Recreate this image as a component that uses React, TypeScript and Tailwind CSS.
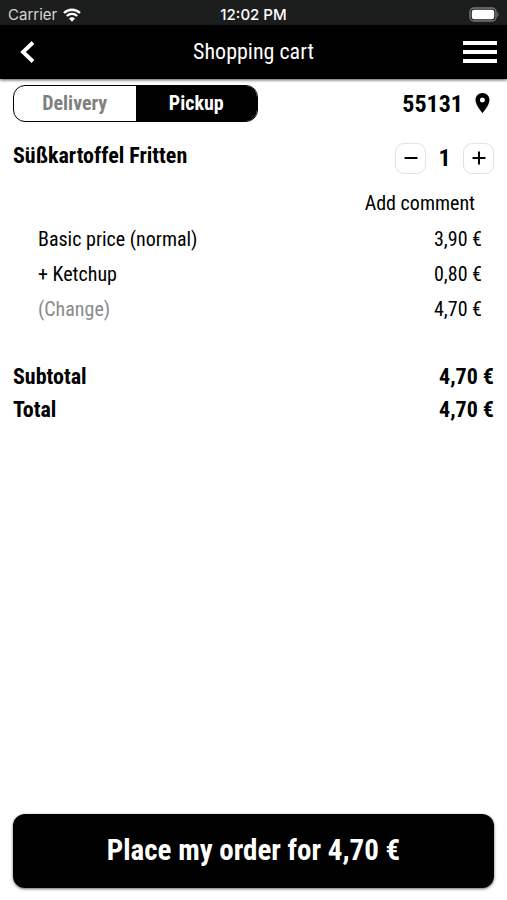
import { useState } from "react";

const unitPrice = { base: 3.9, ketchup: 0.8 };

function formatPrice(value: number) {
  return `${value.toFixed(2).replace(".", ",")} €`;
}

function StatusBar() {
  return (
    <div className="grid h-[25px] grid-cols-3 items-center bg-[#1c1e1d] px-2 pt-1 font-['Inter','Liberation_Sans',sans-serif] text-[15px] leading-5 text-white">
      <div className="flex items-center gap-[6px] text-[#d6d6d6]">
        <span>Carrier</span>
        <svg aria-hidden="true" className="h-[14px] w-[18px]" fill="none" viewBox="0 0 18 14">
          <path d="M1 5a11.5 11.5 0 0 1 16 0" stroke="#fff" strokeWidth="2.4" />
          <path d="M3.8 8a7.5 7.5 0 0 1 10.4 0" stroke="#fff" strokeWidth="2.3" />
          <path d="M9 13.8 6 10.6a4.4 4.4 0 0 1 6 0z" fill="#fff" />
        </svg>
      </div>
      <span className="text-center font-medium">12:02 PM</span>
      <svg aria-hidden="true" className="h-[15px] w-[31px] justify-self-end" fill="none" viewBox="0 0 31 15">
        <rect height="13" rx="4" stroke="#777978" strokeWidth="1.4" width="26" x="2" y="1" />
        <rect fill="#fff" height="9.4" rx="2.2" width="22.4" x="3.8" y="2.8" />
        <path d="M29.4 5.2c1.6.6 1.6 4 0 4.6z" fill="#777978" />
      </svg>
    </div>
  );
}

function Header() {
  return (
    <header className="flex h-[54px] items-center justify-between bg-black px-[10px] text-white shadow-[0_1px_3px_rgba(0,0,0,0.7)]">
      <button aria-label="Back" className="flex w-9 justify-start pl-[10px]" type="button">
        <svg aria-hidden="true" className="h-[22px] w-[15px]" fill="none" viewBox="0 0 15 22">
          <path d="M13 1.5 3 11l10 9.500" stroke="#fff" strokeWidth="3.8" />
        </svg>
      </button>
      <h1 className="text-[22px] leading-7">Shopping cart</h1>
      <button aria-label="Menu" className="flex w-9 justify-end" type="button">
        <svg aria-hidden="true" className="h-6 w-[34px]" viewBox="0 0 34 24">
          <path d="M0 1h34v4H0zM0 10h34v4H0zM0 19h34v4H0z" fill="#fff" />
        </svg>
      </button>
    </header>
  );
}

export default function App() {
  const [mode, setMode] = useState<"delivery" | "pickup">("pickup");
  const [quantity, setQuantity] = useState(1);

  const total = quantity * (unitPrice.base + unitPrice.ketchup);
  const stepper = "flex h-[31px] w-[31px] items-center justify-center rounded-[9px] border border-[#e2e2e2]";

  return (
    <div className="flex min-h-screen flex-col bg-white font-['Roboto_Condensed',Roboto,sans-serif] text-black">
      <StatusBar />
      <Header />
      <main className="flex flex-1 flex-col px-[13px] pt-[6px] pb-3">
        <div className="flex items-center justify-between">
          <div className="flex h-[37px] w-[245px] overflow-hidden rounded-xl border border-black text-[20px] font-bold">
            <button
              aria-pressed={mode === "delivery"}
              className={`flex-1 pb-px ${mode === "delivery" ? "bg-black text-white" : "text-[#808080]"}`}
              onClick={() => setMode("delivery")}
              type="button"
            >
              Delivery
            </button>
            <button
              aria-pressed={mode === "pickup"}
              className={`flex-1 pb-px ${mode === "pickup" ? "bg-black text-white" : "text-[#808080]"}`}
              onClick={() => setMode("pickup")}
              type="button"
            >
              Pickup
            </button>
          </div>
          <button className="flex items-center gap-3 pr-1 text-[24px] leading-8 font-bold" type="button">
            55131
            <svg aria-hidden="true" className="mb-[2px] h-5 w-[15px]" viewBox="5 2 14 20">
              <path
                d="M12 2C8.130 2 5 5.130 5 9c0 5.250 7 13 7 13s7-7.750 7-13c0-3.870-3.130-7-7-7zm0 9.500a2.500 2.500 0 1 1 0-5 2.500 2.500 0 0 1 0 5z"
                fill="#000"
              />
            </svg>
          </button>
        </div>

        <section className="mt-5">
          <div className="flex items-center justify-between">
            <h2 className="pb-1 text-[22px] leading-7 font-bold">Süßkartoffel Fritten</h2>
            <div className="flex items-center">
              <button aria-label="Less" className={stepper} onClick={() => setQuantity(Math.max(1, quantity - 1))} type="button">
                <svg aria-hidden="true" className="h-4 w-4" viewBox="0 0 16 16">
                  <path d="M1.500 8h13" stroke="#000" strokeWidth="2" />
                </svg>
              </button>
              <span className="w-[37px] text-center text-[24px] leading-8 font-bold">{quantity}</span>
              <button aria-label="More" className={stepper} onClick={() => setQuantity(quantity + 1)} type="button">
                <svg aria-hidden="true" className="h-4 w-4" viewBox="0 0 16 16">
                  <path d="M1.500 8h13M8 1.500v13" stroke="#000" strokeWidth="2" />
                </svg>
              </button>
            </div>
          </div>
          <div className="mt-[11px] flex h-9 items-center justify-end pr-[19px]">
            <button className="text-[20px] leading-7" type="button">Add comment</button>
          </div>
          <table className="w-full text-[20px] leading-7">
            <tbody>
              <tr className="h-[35px]">
                <td className="pl-[25px]">Basic price (normal)</td>
                <td className="pr-3 text-right">{formatPrice(unitPrice.base)}</td>
              </tr>
              <tr className="h-[35px]">
                <td className="pl-[25px]">+ Ketchup</td>
                <td className="pr-3 text-right">{formatPrice(unitPrice.ketchup)}</td>
              </tr>
              <tr className="h-[35px]">
                <td className="pl-[25px]">
                  <button className="text-[#8a8a8a]" type="button">(Change)</button>
                </td>
                <td className="pr-3 text-right">{formatPrice(total)}</td>
              </tr>
            </tbody>
          </table>
        </section>

        <dl className="mt-[34px] text-[22px] leading-[33px] font-bold">
          <div className="flex justify-between">
            <dt>Subtotal</dt>
            <dd>{formatPrice(total)}</dd>
          </div>
          <div className="flex justify-between">
            <dt>Total</dt>
            <dd>{formatPrice(total)}</dd>
          </div>
        </dl>

        <button
          className="mt-auto h-[74px] w-full rounded-xl bg-black text-[29px] font-bold text-white shadow-[0_1px_3px_rgba(0,0,0,0.6)]"
          type="button"
        >
          Place my order for {formatPrice(total)}
        </button>
      </main>
    </div>
  );
}
